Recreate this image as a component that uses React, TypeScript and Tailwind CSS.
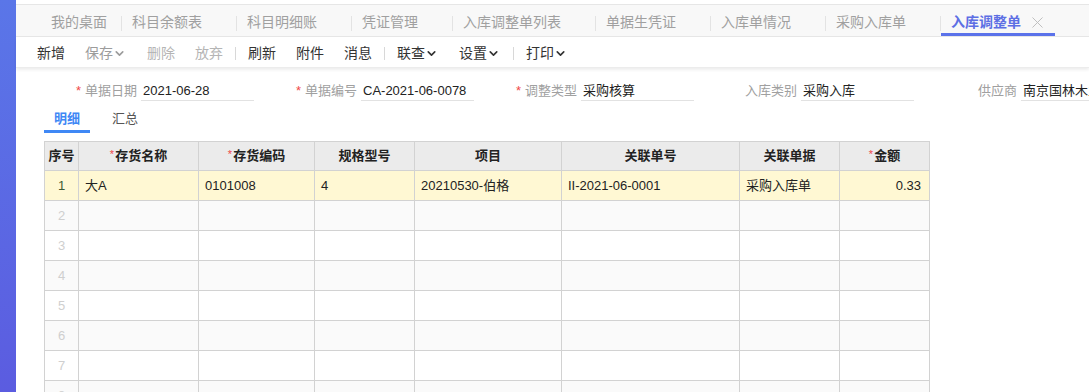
import { X, ChevronDown } from "lucide-react"

const font = { fontFamily: '"Liberation Sans", "Noto Sans CJK SC", sans-serif' }

const tabs = [
  { name: "我的桌面", closable: false },
  { name: "科目余额表", closable: true },
  { name: "科目明细账", closable: true },
  { name: "凭证管理", closable: true },
  { name: "入库调整单列表", closable: true },
  { name: "单据生凭证", closable: true },
  { name: "入库单情况", closable: true },
  { name: "采购入库单", closable: true },
  { name: "入库调整单", closable: true, active: true },
]

type Tool = { label: string; disabled?: "soft" | "hard"; menu?: boolean } | "sep"

const tools: Tool[] = [
  { label: "新增" },
  { label: "保存", disabled: "soft", menu: true },
  { label: "删除", disabled: "hard" },
  { label: "放弃", disabled: "hard" },
  "sep",
  { label: "刷新" },
  { label: "附件" },
  { label: "消息" },
  "sep",
  { label: "联查", menu: true },
  { label: "设置", menu: true },
  "sep",
  { label: "打印", menu: true },
]

const fields = [
  { label: "单据日期", value: "2021-06-28", required: true },
  { label: "单据编号", value: "CA-2021-06-0078", required: true },
  { label: "调整类型", value: "采购核算", required: true },
  { label: "入库类别", value: "采购入库" },
  { label: "供应商", value: "南京国林木业有限公司" },
]

const cols = [
  { title: "序号", w: 34 },
  { title: "存货名称", w: 120, required: true },
  { title: "存货编码", w: 116, required: true },
  { title: "规格型号", w: 100 },
  { title: "项目", w: 147 },
  { title: "关联单号", w: 178 },
  { title: "关联单据", w: 100 },
  { title: "金额", w: 90, required: true },
]

const firstRow = ["大A", "0101008", "4", "20210530-伯格", "II-2021-06-0001", "采购入库单", "0.33"]

export default function App() {
  return (
    <div className="flex h-[392px] w-[1089px] overflow-hidden bg-white" style={font}>
      {/* left menu strip */}
      <div className="w-[16px] shrink-0 bg-gradient-to-b from-[#5a76e8] to-[#5b5ce0]" />

      <div className="min-w-0 flex-1">
        {/* open tabs */}
        <div className="mt-[4px] flex h-[33px] items-stretch border-y border-[#e6e6e6] bg-[#f8f8f8] pl-[24px]">
          {tabs.map((t, i) => (
            <div key={t.name} className="flex items-stretch">
              {i > 0 && <div className="mt-[11px] h-[15px] w-px bg-[#e3e3e3]" />}
              <div
                className={`flex items-center text-[14px] ${t.closable ? "pl-[10px] pr-[12px]" : "pl-[11px] pr-[14px]"} ${
                  t.active ? "border-b-[3px] border-[#5b72ea] pt-[7px] font-bold text-[#5d6fe4]" : "pt-[4px] text-[#a0a0a0]"
                }`}
              >
                <span>{t.name}</span>
                {t.closable && (
                  <span className="ml-[10px] flex w-[12px] justify-center">
                    {t.active && <X size={19} strokeWidth={1.2} className="shrink-0 text-[#bdbdbd]" />}
                  </span>
                )}
              </div>
            </div>
          ))}
        </div>

        {/* toolbar */}
        <div className="relative z-10 flex h-[31px] items-center border-b border-[#ececec] pl-[11px] pt-[2px] text-[14px] shadow-[0_2px_3px_rgba(0,0,0,0.07)]">
          {tools.map((t, i) =>
            t === "sep" ? (
              <div key={i} className="mx-[2px] h-[13px] w-px bg-[#d8d8d8]" />
            ) : (
              <div
                key={t.label}
                className={`flex items-center pl-[10px] ${t.menu ? "pr-[11px]" : "pr-[10px]"} ${
                  t.disabled === "soft" ? "text-[#9c9c9c]" : t.disabled === "hard" ? "text-[#b5b5b5]" : "text-[#333]"
                }`}
              >
                <span>{t.label}</span>
                {t.menu && <ChevronDown size={13} strokeWidth={3} />}
              </div>
            )
          )}
        </div>

        {/* header fields */}
        <div className="flex pl-[18px] pt-[11px]">
          {fields.map((f) => (
            <div key={f.label} className="flex shrink-0 items-stretch">
              <div className="flex w-[107px] items-center justify-end pr-[4px] pt-[1px] text-[13px] text-[#a0a0a0]">
                {f.required && <span className="mr-[4px] text-[#f04848]">*</span>}
                <span>{f.label}</span>
              </div>
              <div className="flex h-[22px] w-[113px] items-center overflow-hidden whitespace-nowrap border-b border-[#e2e2e2] pl-[2px] pt-[2px] text-[13px] text-[#222]">
                {f.value}
              </div>
            </div>
          ))}
        </div>

        {/* detail / summary tabs */}
        <div className="mt-[4px] flex h-[28px] pl-[28px] text-[13px]">
          <div className="flex items-center border-b-[3px] border-[#3f88f5] px-[10px] pt-[3px] font-bold text-[#3f88f5]">明细</div>
          <div className="ml-[12px] flex items-center px-[10px] text-[#555]">汇总</div>
        </div>

        {/* detail grid */}
        <div className="mt-[8px] pl-[28px]">
          <table className="table-fixed border-collapse text-[13px] text-[#222]">
            <colgroup>
              {cols.map((c) => (
                <col key={c.title} style={{ width: c.w }} />
              ))}
            </colgroup>
            <thead>
              <tr className="h-[29px] bg-[#ebebeb]">
                {cols.map((c) => (
                  <th key={c.title} className="border border-[#d2d2d2] p-0 text-center font-bold text-[#222]">
                    {c.required && <span className="mr-[1px] align-top text-[11px] font-normal text-[#f04848]">*</span>}
                    {c.title}
                  </th>
                ))}
              </tr>
            </thead>
            <tbody>
              <tr className="h-[30px] bg-[#fff8d3]">
                <td className="border border-[#d2d2d2] text-center text-[#3d5a34]">1</td>
                {firstRow.map((v, i) => (
                  <td
                    key={i}
                    className={`whitespace-nowrap border border-[#d2d2d2] ${i === 6 ? "pr-[8px] text-right" : "pl-[6px]"}`}
                  >
                    {v}
                  </td>
                ))}
              </tr>
              {[2, 3, 4, 5, 6, 7, 8].map((n) => (
                <tr key={n} className={`h-[30px] ${n % 2 === 0 ? "bg-[#fafafa]" : "bg-white"}`}>
                  <td className="border border-[#d2d2d2] text-center text-[#cfcfcf]">{n}</td>
                  {firstRow.map((_, i) => (
                    <td key={i} className="border border-[#d2d2d2]" />
                  ))}
                </tr>
              ))}
            </tbody>
          </table>
        </div>
      </div>
    </div>
  )
}
